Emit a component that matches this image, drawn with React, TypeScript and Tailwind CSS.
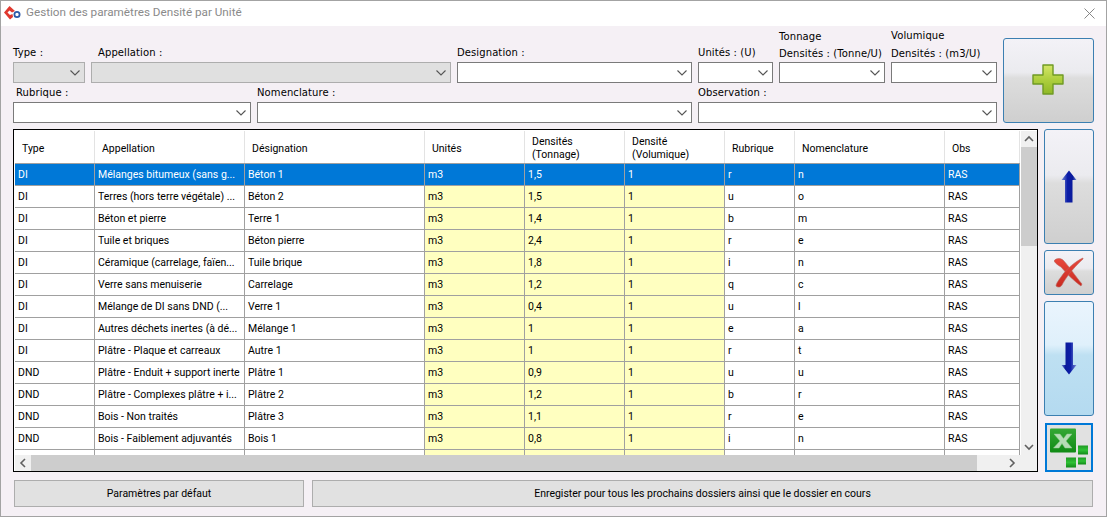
import React from "react";

const rows = [
  ["DI", "Mélanges bitumeux (sans g...", "Béton 1", "m3", "1,5", "1", "r", "n", "RAS"],
  ["DI", "Terres (hors terre végétale) ...", "Béton 2", "m3", "1,5", "1", "u", "o", "RAS"],
  ["DI", "Béton et pierre", "Terre 1", "m3", "1,4", "1", "b", "m", "RAS"],
  ["DI", "Tuile et briques", "Béton pierre", "m3", "2,4", "1", "r", "e", "RAS"],
  ["DI", "Céramique (carrelage, faïen...", "Tuile brique", "m3", "1,8", "1", "i", "n", "RAS"],
  ["DI", "Verre sans menuiserie", "Carrelage", "m3", "1,2", "1", "q", "c", "RAS"],
  ["DI", "Mélange de DI sans DND (...", "Verre 1", "m3", "0,4", "1", "u", "l", "RAS"],
  ["DI", "Autres déchets inertes (à dé...", "Mélange 1", "m3", "1", "1", "e", "a", "RAS"],
  ["DI", "Plâtre - Plaque et carreaux", "Autre 1", "m3", "1", "1", "r", "t", "RAS"],
  ["DND", "Plâtre - Enduit + support inerte", "Plâtre 1", "m3", "0,9", "1", "u", "u", "RAS"],
  ["DND", "Plâtre - Complexes plâtre + i...", "Plâtre 2", "m3", "1,2", "1", "b", "r", "RAS"],
  ["DND", "Bois - Non traités", "Plâtre 3", "m3", "1,1", "1", "r", "e", "RAS"],
  ["DND", "Bois - Faiblement adjuvantés", "Bois 1", "m3", "0,8", "1", "i", "n", "RAS"],
  ["", "", "", "", "", "", "", "", ""],
];

const widths = ["w-[80px]", "w-[150px]", "w-[180px]", "w-[100px]", "w-[100px]", "w-[100px]", "w-[70px]", "w-[150px]", "w-[75px]"];

function Chevron() {
  return (
    <svg width="10" height="6" viewBox="0 0 10 6" fill="none" stroke="#555" strokeWidth="1.1">
      <path d="M0.5 0.5 L5 5 L9.5 0.5" />
    </svg>
  );
}

function Combo({ w, disabled = false }: { w: string; disabled?: boolean }) {
  return (
    <div className={`${w} h-[21px] shrink-0 border flex items-center justify-end pr-[4px] ${disabled ? "bg-[#e0e0e0] border-[#adadad]" : "bg-white border-[#7a7a7a]"}`}>
      <Chevron />
    </div>
  );
}

function Label({ w, children, cls = "" }: { w: string; children: React.ReactNode; cls?: string }) {
  return <div className={`${w} shrink-0 text-[10px] leading-[12px] text-black tracking-[0.1px] whitespace-nowrap ${cls}`}>{children}</div>;
}

const normalBtn = "bg-[linear-gradient(180deg,#f3f2f7_0%,#ebebef_40%,#dddddd_47%,#cfcfcf_100%)] border-[#3c7fb1]";
const hoverBtn = "bg-[linear-gradient(180deg,#eaf4fd_0%,#dff0fb_38%,#bee0f2_47%,#b4daf0_100%)] border-[#3c7fb1]";

function Plus() {
  return (
    <svg width="32" height="31" viewBox="0 0 32 31" className="-mt-[3px] -ml-[2px]">
      <defs>
        <linearGradient id="pg" x1="0" y1="0" x2="0" y2="1">
          <stop offset="0" stopColor="#d4e668" />
          <stop offset="0.5" stopColor="#aecf3e" />
          <stop offset="1" stopColor="#8fb826" />
        </linearGradient>
      </defs>
      <path d="M11 1 H21 V11 H31 V20 H21 V30 H11 V20 H1 V11 H11 Z" fill="url(#pg)" stroke="#6f9a24" strokeWidth="1.4" strokeLinejoin="round" />
    </svg>
  );
}

function Arrow({ down = false }: { down?: boolean }) {
  const id = down ? "ad" : "au";
  return (
    <svg width="16" height="33" viewBox="0 0 16 33" className={down ? "rotate-180" : ""}>
      <defs>
        <linearGradient id={id} x1="0" y1="0" x2="1" y2="0">
          <stop offset="0" stopColor="#7b8ed4" />
          <stop offset="0.4" stopColor="#0c1ea8" />
          <stop offset="0.75" stopColor="#0a1a9a" />
          <stop offset="1" stopColor="#6f8ad0" />
        </linearGradient>
      </defs>
      <path d="M8 0.5 L15.500 10 H11.500 V32.500 H4 V10 H0.500 Z" fill={`url(#${id})`} />
    </svg>
  );
}

function RedX() {
  return (
    <svg width="30" height="31" viewBox="0 0 30 31">
      <defs>
        <linearGradient id="rx" x1="0" y1="0" x2="0" y2="1">
          <stop offset="0" stopColor="#e8483c" />
          <stop offset="1" stopColor="#c92a20" />
        </linearGradient>
      </defs>
      <path d="M0 4 C2 1 6 1 9 3 C14 8 22 20 28 27 L27 29 C20 24 12 16 7 10 C4 8 2 7 0 4 Z" fill="url(#rx)" stroke="#b9675f" strokeWidth="0.6" />
      <path d="M29 1 C22 4 12 12 7 20 C4 24 2 27 2 29 C4 31 7 30 8 28 C11 22 18 12 29 2 Z" fill="url(#rx)" stroke="#b9675f" strokeWidth="0.6" />
    </svg>
  );
}

function ExcelIcon() {
  return (
    <svg width="40" height="40" viewBox="0 0 40 40">
      <defs>
        <linearGradient id="xg" x1="0" y1="0" x2="0" y2="1">
          <stop offset="0" stopColor="#35a835" />
          <stop offset="1" stopColor="#0f8a14" />
        </linearGradient>
        <linearGradient id="xs" x1="0" y1="0" x2="0" y2="1">
          <stop offset="0" stopColor="#1e9a22" />
          <stop offset="0.5" stopColor="#2fc035" />
          <stop offset="1" stopColor="#128a18" />
        </linearGradient>
      </defs>
      <rect x="1" y="0.5" width="26" height="24" rx="1" fill="url(#xg)" />
      <path d="M5 6 H11 L14.500 10.500 L18 6 H23 L17 13 L23 20 H16 L13 15.500 L10 20 H4.500 L11 13 Z" fill="#b5dcb5" stroke="#8fcb8f" strokeWidth="0.5" />
      <rect x="29" y="17.500" width="10" height="9" fill="url(#xs)" />
      <rect x="17" y="29.500" width="10" height="10" fill="url(#xs)" />
      <rect x="29" y="29.500" width="8" height="7" fill="url(#xs)" />
    </svg>
  );
}

function ScrollChevron({ dir }: { dir: "up" | "down" | "left" | "right" }) {
  const d = { up: "M1 6 L5 2 L9 6", down: "M1 2 L5 6 L9 2", left: "M6 1 L2 5 L6 9", right: "M2 1 L6 5 L2 9" }[dir];
  return (
    <svg width="10" height="10" viewBox={dir === "left" || dir === "right" ? "0 0 8 10" : "0 0 10 8"} fill="none" stroke="#606060" strokeWidth="1.6">
      <path d={d} />
    </svg>
  );
}

export default function App() {
  return (
    <div className="w-[1107px] h-[517px] overflow-hidden bg-[#f5f0f5] border border-[#a3a3a3] flex flex-col font-['Roboto',sans-serif]">
      {/* Title bar */}
      <div className="h-[25px] shrink-0 bg-white flex items-center pl-[3px] pr-[11px]">
        <svg width="17" height="16" viewBox="0 0 17 16" className="shrink-0">
          <path d="M5.500 0 L11 5 L8 6.500 L5.500 4.500 L3.500 6.500 L6 9 L8.500 8 L9 11 L6 13.500 L0 6.500 Z" fill="#e0392f" />
          <circle cx="13" cy="8.500" r="2.600" fill="none" stroke="#2d5aa8" strokeWidth="1.800" />
        </svg>
        <div className="ml-[5px] text-[11.7px] text-[#8a8a8a] whitespace-nowrap -mt-[1px]">Gestion des paramètres Densité par Unité</div>
        <svg width="11" height="11" viewBox="0 0 11 11" className="ml-auto" stroke="#7a7a7a" strokeWidth="0.9">
          <path d="M0.500 0.500 L10.500 10.500 M10.500 0.500 L0.500 10.500" />
        </svg>
      </div>

      {/* Form */}
      <div className="flex pl-[12px] pt-[12px] gap-[6px] h-[97px] shrink-0 font-['DejaVu_Sans',sans-serif]">
        <div className="flex flex-col w-[984px]">
          <div className="h-[24px] flex items-end pb-[3px]">
            <Label w="w-[85px]">Type :</Label>
            <Label w="w-[359px]">Appellation :</Label>
            <Label w="w-[241px]">Designation :</Label>
            <Label w="w-[81px]">Unités : (U)</Label>
            <div className="w-[112px] shrink-0 flex flex-col gap-[5px] -mb-[1px]">
              <Label w="w-[112px]">Tonnage</Label>
              <Label w="w-[112px]">Densités : (Tonne/U)</Label>
            </div>
            <div className="w-[106px] shrink-0 flex flex-col gap-[6px] -mb-[1px]">
              <Label w="w-[106px]">Volumique</Label>
              <Label w="w-[106px]">Densités : (m3/U)</Label>
            </div>
          </div>
          <div className="flex gap-[6px]">
            <Combo w="w-[72px]" disabled />
            <Combo w="w-[360px]" disabled />
            <Combo w="w-[235px]" />
            <Combo w="w-[75px]" />
            <Combo w="w-[106px]" />
            <Combo w="w-[106px]" />
          </div>
          <div className="h-[19px] flex items-end pb-[3px]">
            <Label w="w-[244px]" cls="pl-[3px]">Rubrique :</Label>
            <Label w="w-[441px]">Nomenclature :</Label>
            <Label w="w-[299px]">Observation :</Label>
          </div>
          <div className="flex gap-[6px]">
            <Combo w="w-[238px]" />
            <Combo w="w-[435px]" />
            <Combo w="w-[299px]" />
          </div>
        </div>
        <div className={`w-[91px] h-[85px] border rounded-[3px] flex items-center justify-center ${normalBtn}`}>
          <Plus />
        </div>
      </div>

      {/* Main */}
      <div className="flex pl-[12px] gap-[6px] h-[343px] shrink-0 mt-[6px]">
        <div className="w-[1025px] h-[343px] border border-black bg-white flex flex-col shrink-0 text-[10.5px] text-black">
          <div className="flex flex-1 min-h-0 pt-px pl-px">
            <div className="w-[1005px] shrink-0 overflow-hidden">
              <div className="flex h-[32px]">
                {["Type", "Appellation", "Désignation", "Unités", "Densités\n(Tonnage)", "Densité\n(Volumique)", "Rubrique", "Nomenclature", "Obs"].map((h, i) => (
                  <div key={i} className={`${widths[i]} h-[32px] shrink-0 flex items-center pl-[7px] pt-[2px] border-r border-r-[#e3e3e3] whitespace-pre-line leading-[13px]`}>
                    {h}
                  </div>
                ))}
              </div>
              {rows.map((r, ri) => (
                <div key={ri} className={`flex h-[22px] border-t border-[#a0a0a0] ${ri === 0 ? "bg-[#0078d7] text-white" : ""}`}>
                  {r.map((c, ci) => (
                    <div
                      key={ci}
                      className={`${widths[ci]} shrink-0 h-[21px] flex items-center pl-[3px] pt-px border-r border-[#a0a0a0] whitespace-nowrap overflow-hidden ${ri > 0 && ci >= 3 && ci <= 5 ? "bg-[#ffffc0]" : ""}`}
                    >
                      {c}
                    </div>
                  ))}
                </div>
              ))}
            </div>
            {/* vertical scrollbar */}
            <div className="flex-1 bg-[#f0f0f0] flex flex-col ml-px">
              <div className="h-[16px] flex items-center justify-center"><ScrollChevron dir="up" /></div>
              <div className="h-[99px] bg-[#cdcdcd]" />
              <div className="flex-1" />
              <div className="h-[16px] flex items-center justify-center"><ScrollChevron dir="down" /></div>
            </div>
          </div>
          {/* horizontal scrollbar */}
          <div className="h-[16px] shrink-0 bg-[#f0f0f0] flex ml-px">
            <div className="w-[16px] flex items-center justify-center"><ScrollChevron dir="left" /></div>
            <div className="w-[946px] bg-[#cdcdcd]" />
            <div className="w-[27px]" />
            <div className="w-[16px] flex items-center justify-center"><ScrollChevron dir="right" /></div>
          </div>
        </div>

        <div className="flex flex-col w-[50px] shrink-0">
          <div className={`h-[115px] border rounded-[3px] flex items-center justify-center ${normalBtn}`}><Arrow /></div>
          <div className={`h-[45px] mt-[6px] border rounded-[3px] flex items-center justify-center ${normalBtn}`}><RedX /></div>
          <div className={`h-[115px] mt-[6px] border rounded-[3px] flex items-center justify-center ${hoverBtn}`}><Arrow down /></div>
          <div className="h-[49px] w-[48px] mt-[7px] ml-px border-2 border-[#0078d7] bg-[#e1e1e1] flex items-center justify-center"><ExcelIcon /></div>
        </div>
      </div>

      {/* Bottom */}
      <div className="flex pl-[13px] gap-[8px] mt-[8px] text-[10.5px] text-black">
        <div className="w-[290px] h-[27px] bg-[#e1e1e1] border border-[#adadad] flex items-center justify-center pt-px">Paramètres par défaut</div>
        <div className="w-[781px] h-[27px] bg-[#e1e1e1] border border-[#adadad] flex items-center justify-center pt-px">Enregister pour tous les prochains dossiers ainsi que le dossier en cours</div>
      </div>
    </div>
  );
}
